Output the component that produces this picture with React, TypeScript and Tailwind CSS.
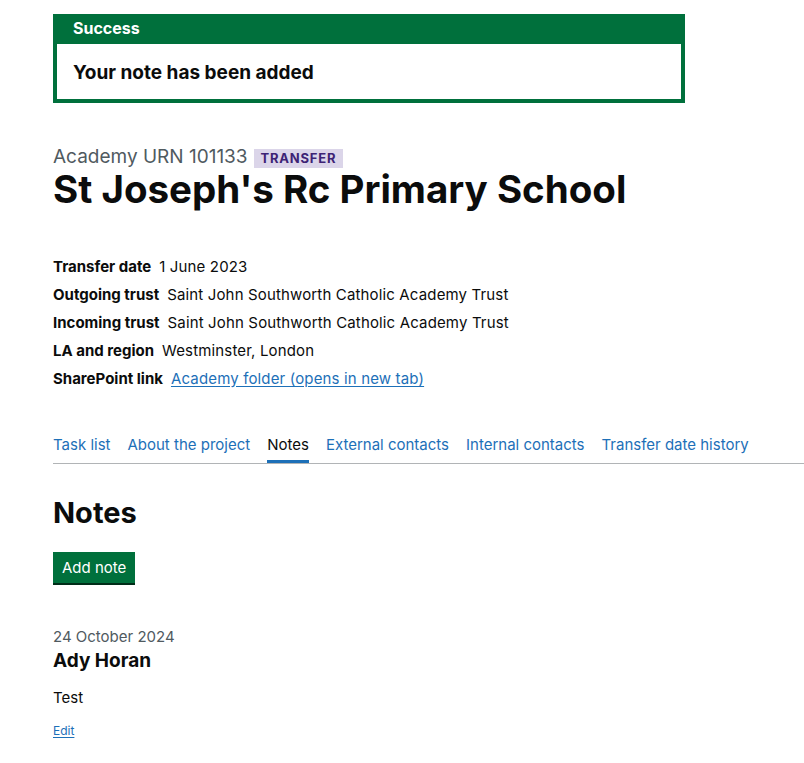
import React from 'react';

const summary: [string, React.ReactNode][] = [
  ['Transfer date', '1 June 2023'],
  ['Outgoing trust', 'Saint John Southworth Catholic Academy Trust'],
  ['Incoming trust', 'Saint John Southworth Catholic Academy Trust'],
  ['LA and region', 'Westminster, London'],
  [
    'SharePoint link',
    <a href="#" className="text-[#1d70b8] underline underline-offset-2">
      Academy folder (opens in new tab)
    </a>,
  ],
];

const tabs = ['Task list', 'About the project', 'Notes', 'External contacts', 'Internal contacts', 'Transfer date history'];

export default function App() {
  return (
    <div className="min-h-[763px] overflow-hidden bg-white pl-[53px] text-[#0b0c0c]" style={{ fontFamily: 'Inter, "Noto Sans", sans-serif' }}>
      <div className="mt-[14px] w-[632px] border-4 border-[#00703c]">
        <div className="h-[26px] bg-[#00703c] px-4 text-[16px] font-bold leading-[20px] text-white">Success</div>
        <div className="flex h-[55px] items-center px-4 pt-[3px] text-[19px] font-bold">Your note has been added</div>
      </div>

      <div className="mt-[42px] flex items-center gap-[6px]">
        <span className="text-[19px] leading-[24px] text-[#505a5f]">Academy URN 101133</span>
        <span className="mt-[2px] bg-[#dbd5e9] px-[7px] py-[1px] text-[13px] font-bold uppercase leading-[17px] tracking-[0.06em] text-[#3d2375]">Transfer</span>
      </div>
      <h1 className="-mt-[2px] text-[38.5px] font-bold leading-[44px]">St Joseph's Rc Primary School</h1>

      <dl className="mt-[42px] flex flex-col">
        {summary.map(([k, v]) => (
          <div key={k} className="flex h-[28px] items-center gap-[8px] text-[15px]">
            <dt className="font-bold">{k}</dt>
            <dd className="tracking-[0.01em]">{v}</dd>
          </div>
        ))}
      </dl>

      <nav className="mt-[41px] flex gap-[17px] border-b border-[#b1b4b6] text-[15px]">
        {tabs.map((t) => (
          <a
            key={t}
            href="#"
            className={
              t === 'Notes'
                ? 'border-b-[3px] border-[#1d70b8] pb-[3px] text-[#0b0c0c]'
                : 'border-b-[3px] border-transparent pb-[3px] text-[#1d70b8]'
            }
          >
            {t}
          </a>
        ))}
      </nav>

      <h2 className="mt-[31px] text-[29px] font-bold leading-[36px]">Notes</h2>
      <button className="mt-[21px] h-[31px] bg-[#00703c] px-[9px] pt-[3px] text-[15px] text-white shadow-[0_2px_0_#002d18]">Add note</button>

      <div className="mt-[44px] text-[15px] leading-[20px] text-[#505a5f]">24 October 2024</div>
      <div className="text-[19px] font-bold leading-[28px]">Ady Horan</div>
      <p className="mt-[13px] text-[15px] leading-[20px]">Test</p>
      <a href="#" className="mt-[14px] inline-block text-[12px] text-[#1d70b8] underline underline-offset-2">Edit</a>
    </div>
  );
}
